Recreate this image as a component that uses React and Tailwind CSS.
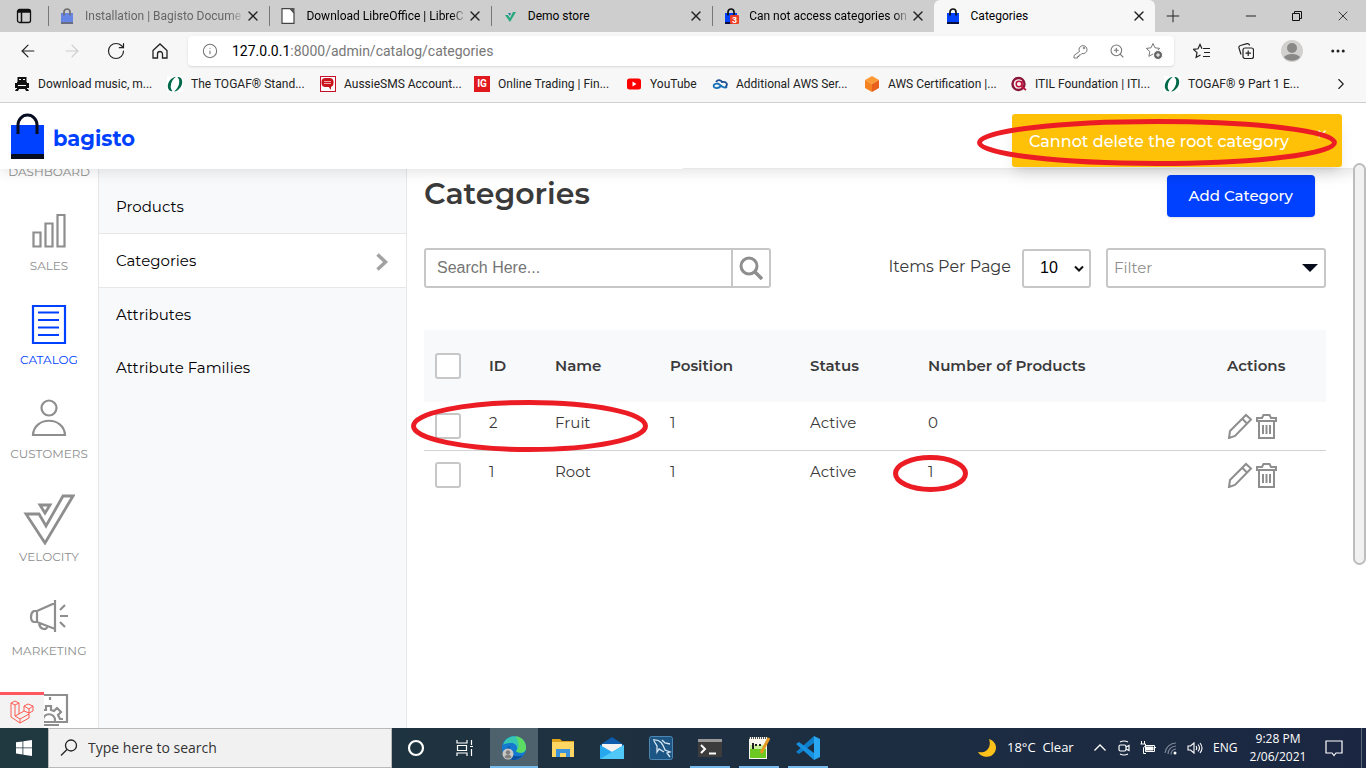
import React from 'react';
import {
  ArrowLeft, ArrowRight, RotateCw, Info, ZoomIn, X, Plus, Minus, Ellipsis, ChevronRight,
} from 'lucide-react';

const BagIcon = ({ className = 'h-4 w-4', badge }) => (
  <svg viewBox="0 0 16 16" className={className} aria-hidden="true">
    <rect x="2" y="5" width="12" height="9" fill="#0041ff" />
    <rect x="2" y="14" width="12" height="2" fill="#060c3b" />
    <path d="M5 7.500V4a3 3 0 0 1 6 0v3.500" fill="none" stroke="#111" strokeWidth="1.700" />
    {badge && (
      <>
        <rect x="7" y="7" width="9" height="9" rx="1" fill="#f03d25" />
        <text x="11.500" y="15" fontSize="9" fontWeight="700" fill="#fff" textAnchor="middle" fontFamily="Liberation Sans">3</text>
      </>
    )}
  </svg>
);

const DocIcon = () => (
  <svg viewBox="0 0 16 16" className="h-4 w-4" aria-hidden="true">
    <path d="M2 .7h8L14 5v10.300H2z" fill="#fff" stroke="#444" strokeWidth="1.200" />
    <path d="M9 0h5.500v5.500z" fill="#555" />
  </svg>
);

const CheckLogo = () => (
  <svg viewBox="0 0 16 16" className="h-4 w-4" aria-hidden="true">
    <path d="M3 7h3l2 3 3-6h3L8 14z" fill="#26a97f" />
    <path d="M6 5h3L8 8z" fill="#26799f" />
  </svg>
);

const TogafIcon = () => (
  <svg viewBox="0 0 16 16" className="h-4 w-4" aria-hidden="true">
    <rect width="16" height="16" fill="#fff" />
    <path d="M9 .8C2 1.500-1.500 11 2.500 14.500c1 .9 2.500.9 3 .5C2 12 4 4 9 .8z" fill="#00694b" />
    <path d="M7 15.500c7-.7 10.500-10.200 6.500-13.700-1-.9-2.500-.9-3-.5C14 4.300 12 12.300 7 15.500z" fill="#00694b" />
  </svg>
);

const bookmarkIcons = {
  music: (
    <svg viewBox="0 0 16 16" className="h-4 w-4" aria-hidden="true">
      <path d="M3.500 1h9v5h-9zM1 7h14v5H1zM2 13h3l-1 2H1zM11 13h3l1 2h-3z" fill="#111" />
      <path d="M5 3.500h2M9 3.500h2M4 9.500h8" stroke="#fff" />
      <path d="M3 6.500h10M3 12.500h10" stroke="#111" />
    </svg>
  ),
  togaf: <TogafIcon />,
  sms: (
    <svg viewBox="0 0 16 16" className="h-4 w-4" aria-hidden="true">
      <rect x=".5" y=".5" width="15" height="15" fill="#fff" stroke="#c8102e" />
      <rect x="1.500" y="2" width="12" height="9" rx="4" fill="#c8141b" />
      <path d="M8 10l3 4V9z" fill="#c8141b" />
      <path d="M4 5.500h7M4 7.500h7" stroke="#f4a9a9" />
    </svg>
  ),
  ig: <span className="flex h-4 w-4 items-center justify-center bg-[#e1191e] text-[10px] font-bold text-white">IG</span>,
  youtube: (
    <svg viewBox="0 0 16 16" className="h-4 w-4" aria-hidden="true">
      <rect x="1" y="2.500" width="14" height="11" rx="2.500" fill="#f00" />
      <path d="M6.500 5.500v5l4-2.500z" fill="#fff" />
    </svg>
  ),
  cloud: (
    <svg viewBox="0 0 16 16" className="h-4 w-4" fill="none" strokeWidth="1.800" aria-hidden="true">
      <path d="M15 11c-4 3-7-4-10-3.500-5 .5-4 5 0 4.500 2 0 3-1 4-2" stroke="#1a73b8" />
      <path d="M4 6c2-3 5-2 6 0 5-1 6 3 3.500 5" stroke="#1d4f91" />
    </svg>
  ),
  cube: (
    <svg viewBox="0 0 16 16" className="h-4 w-4" aria-hidden="true">
      <path d="M8 0l7 4-7 4-7-4z" fill="#fb9a34" />
      <path d="M1 4l7 4v8l-7-4z" fill="#f58220" />
      <path d="M15 4L8 8v8l7-4z" fill="#e8601c" />
    </svg>
  ),
  itil: (
    <svg viewBox="0 0 16 16" className="h-4 w-4" fill="none" aria-hidden="true">
      <circle cx="7.500" cy="8" r="6" stroke="#8b1538" strokeWidth="2.400" />
      <circle cx="8" cy="8" r="2.800" stroke="#c0123c" strokeWidth="1.500" />
      <path d="M11 5v6l4 3" stroke="#c0123c" strokeWidth="1.600" />
    </svg>
  ),
};

const tabs = [
  { title: 'Installation | Bagisto Docume', icon: <BagIcon />, faded: true },
  { title: 'Download LibreOffice | LibreC', icon: <DocIcon /> },
  { title: 'Demo store', icon: <CheckLogo /> },
  { title: 'Can not access categories on', icon: <BagIcon badge /> },
  { title: 'Categories', icon: <BagIcon />, active: true },
];

const bookmarks = [
  { label: 'Download music, m...', icon: 'music', width: 'w-[153px]' },
  { label: 'The TOGAF® Stand...', icon: 'togaf', width: 'w-[153px]' },
  { label: 'AussieSMS Account...', icon: 'sms', width: 'w-[154px]' },
  { label: 'Online Trading | Fin...', icon: 'ig', width: 'w-[152px]' },
  { label: 'YouTube', icon: 'youtube', width: 'w-[86px]' },
  { label: 'Additional AWS Ser...', icon: 'cloud', width: 'w-[152px]' },
  { label: 'AWS Certification |...', icon: 'cube', width: 'w-[147px]' },
  { label: 'ITIL Foundation | ITI...', icon: 'itil', width: 'w-[153px]' },
  { label: 'TOGAF® 9 Part 1 E...', icon: 'togaf', width: 'w-[153px]' },
];

function Tab({ tab }) {
  return (
    <div className={`flex w-1/5 min-w-0 items-center ${tab.active ? 'rounded-t-md bg-[#f7f7f7]' : ''}`}>
      <span className={`mr-[10px] h-5 w-px shrink-0 ${tab.active ? '' : 'bg-[#777]'}`} />
      <span className={tab.faded ? 'shrink-0 opacity-50' : 'shrink-0'}>{tab.icon}</span>
      <span className={`ml-[10px] flex-1 whitespace-nowrap ${tab.title.length > 20 ? 'mask-r-from-90%' : ''} ${tab.faded ? 'text-[#666]' : 'text-black'}`}>
        {tab.title}
      </span>
      <button aria-label={`Close ${tab.title}`} className="mr-2 shrink-0">
        <X className="h-4 w-4" strokeWidth={2} />
      </button>
    </div>
  );
}

function TabStrip() {
  return (
    <div className="flex h-8 items-stretch bg-[#cecece]">
      <button aria-label="Tab actions" className="flex w-12 items-center justify-center">
        <svg viewBox="0 0 16 16" className="h-4 w-4" fill="none" stroke="#111" aria-hidden="true">
          <rect x="1.500" y="1.500" width="13" height="13" rx="2" strokeWidth="1.300" />
          <path d="M1 4h14M5.500 4v10" strokeWidth="1.500" />
          <path d="M2 3h12" strokeWidth="2" />
        </svg>
      </button>
      <div className="flex min-w-0 flex-1">
        {tabs.map((t) => <Tab key={t.title} tab={t} />)}
      </div>
      <div className="flex w-[211px] items-center">
        <button aria-label="New tab" className="flex w-9 justify-center"><Plus className="h-5 w-5" strokeWidth={1.2} /></button>
        <div className="flex flex-1 justify-end">
          <button aria-label="Minimize" className="flex w-[46px] justify-center"><Minus className="h-4 w-4" strokeWidth={1.5} /></button>
          <button aria-label="Restore" className="flex w-[46px] items-center justify-center">
            <svg viewBox="0 0 12 12" className="h-3 w-3" fill="none" stroke="#111" aria-hidden="true">
              <path d="M1.500 3.500h7v7h-7zM3.500 3.500v-2h7v7h-2" />
            </svg>
          </button>
          <button aria-label="Close window" className="flex w-[46px] justify-center"><X className="h-4 w-4" strokeWidth={1.3} /></button>
        </div>
      </div>
    </div>
  );
}

const starPath = 'M8 1.500l2 4.300 4.700.6-3.500 3.200.9 4.700L8 12l-4.100 2.300.9-4.700L1.300 6.400 6 5.800z';

function Toolbar() {
  const btn = 'flex w-11 shrink-0 items-center justify-center';
  return (
    <div className="flex items-center bg-[#f7f7f7] px-[6px] pb-[3px] pt-1">
      <button aria-label="Back" className={btn}><ArrowLeft className="h-5 w-5" strokeWidth={1.4} /></button>
      <button aria-label="Forward" className={`${btn} text-[#ccc]`}><ArrowRight className="h-5 w-5" strokeWidth={1.4} /></button>
      <button aria-label="Refresh" className={btn}><RotateCw className="h-5 w-5" strokeWidth={1.4} /></button>
      <button aria-label="Home" className={btn}>
        <svg viewBox="0 0 16 16" className="h-4 w-4" fill="none" stroke="#222" strokeWidth="1.300" aria-hidden="true">
          <path d="M1 7.500L8 1l7 6.500V15h-4.500v-4a2.500 2.500 0 0 0-5 0v4H1z" />
        </svg>
      </button>
      <div className="mx-[6px] flex h-[30px] flex-1 items-center rounded bg-white pl-[14px] pr-[11px] text-[#777] shadow-sm">
        <Info className="h-4 w-4" strokeWidth={1.6} />
        <p className="ml-[14px] flex-1 text-sm"><span className="text-black">127.0.0.1</span>:8000/admin/catalog/categories</p>
        <div className="flex items-center gap-5">
          <svg viewBox="0 0 16 16" className="h-4 w-4" fill="none" stroke="currentColor" aria-hidden="true">
            <path d="M6.500 8.500a4 4 0 1 1 2.500 2L7.500 12H6v1.500H4.500V15H1v-2.500z" />
            <circle cx="11" cy="5" r=".8" />
          </svg>
          <ZoomIn className="h-4 w-4" strokeWidth={1.6} />
          <svg viewBox="0 0 18 18" className="h-[18px] w-[18px]" fill="none" stroke="currentColor" aria-hidden="true">
            <path d={starPath} />
            <circle cx="13" cy="13" r="4.500" fill="#666" stroke="#fff" />
            <path d="M13 11v4M11 13h4" stroke="#fff" />
          </svg>
        </div>
      </div>
      <button aria-label="Favorites" className={btn}>
        <svg viewBox="0 0 18 16" className="h-4 w-[18px]" fill="none" stroke="#222" strokeWidth="1.200" aria-hidden="true">
          <path d="M9 5.800L7 1.500 5 5.800l-4.500.6L4 9.600l-.9 4.700L7.500 12M10 5.500h7M11 9.500h6M10 13.500h7" />
        </svg>
      </button>
      <button aria-label="Collections" className={btn}>
        <svg viewBox="0 0 16 16" className="h-4 w-4" fill="none" stroke="#222" strokeWidth="1.200" aria-hidden="true">
          <rect x="5" y="5" width="10.500" height="10.500" rx="2" />
          <path d="M10.200 7.500v5.500M7.500 10.200h5.500M3 11.500L1 5a2 2 0 0 1 1.500-2.500L9 .7A2 2 0 0 1 11.500 2.500" />
        </svg>
      </button>
      <button aria-label="Profile" className="flex w-12 shrink-0 justify-center">
        <svg viewBox="0 0 22 22" className="h-[22px] w-[22px]" aria-hidden="true">
          <circle cx="11" cy="11" r="11" fill="#d2d0ce" />
          <circle cx="11" cy="8" r="5" fill="#8a8886" />
          <path d="M3 17c3-4 13-4 16 0-3 5-13 5-16 0z" fill="#8a8886" />
        </svg>
      </button>
      <button aria-label="Settings and more" className={btn}><Ellipsis className="h-[18px] w-[18px]" strokeWidth={2} /></button>
    </div>
  );
}

function Bookmarks() {
  return (
    <nav aria-label="Bookmarks" className="flex h-[34px] items-center border-b border-[#cfcfcf] bg-[#f7f7f7] pb-1 pl-[14px] pr-4">
      {bookmarks.map((b) => (
        <a key={b.label} href="#" className={`flex shrink-0 items-center gap-2 whitespace-nowrap ${b.width}`}>
          {bookmarkIcons[b.icon]}
          {b.label}
        </a>
      ))}
      <button aria-label="More bookmarks" className="ml-auto"><ChevronRight className="h-[18px] w-[18px]" strokeWidth={1.5} /></button>
    </nav>
  );
}

const menu = [
  {
    label: 'SALES',
    icon: <path d="M8.500 26.500h7v14h-7zM20.500 17.500h7v23h-7zM32.500 9h7v31.500h-7z" />,
  },
  {
    label: 'CATALOG',
    active: true,
    icon: <path d="M8 6h32v37H8zM13 12.500h21M13 20h21M13 27.500h21M13 35h21" />,
  },
  {
    label: 'CUSTOMERS',
    icon: (
      <>
        <circle cx="24" cy="14" r="7.500" />
        <path d="M8 41c1-19 31-19 32 0z" />
      </>
    ),
  },
  {
    label: 'VELOCITY',
    tall: true,
    icon: <path d="M3 21h13l7 12L40 3h10L22 50zM17 12h10l-5 8z" />,
  },
  {
    label: 'MARKETING',
    icon: <path d="M12 20l18-8v26l-18-7zM30 9v32M12 20H9c-4 2-4 10 0 11h3zM14 32c1 8 9 7 8 3M35 19l5-5M35 25h8M35 31l5 5" />,
  },
];

function Sidebar() {
  return (
    <nav aria-label="Main menu" className="w-[99px] shrink-0 overflow-hidden border-r border-[#e7e7e7] bg-white text-[12px] leading-4 text-[#8e8e8e]">
      <a href="#" className="-mt-[5px] block text-center">DASHBOARD</a>
      {menu.map((m) => (
        <a
          key={m.label}
          href="#"
          className={`flex flex-col items-center justify-end ${m.tall ? 'h-[103px]' : 'h-[94px]'} ${m.active ? 'text-[#0041ff]' : ''}`}
        >
          <svg
            viewBox={m.tall ? '0 0 52 52' : '0 0 48 48'}
            className={m.tall ? 'mb-1 h-[52px] w-[52px]' : 'mb-1 h-12 w-12'}
            fill="none"
            stroke="currentColor"
            strokeWidth={m.tall ? 2.8 : 2.2}
            aria-hidden="true"
          >
            {m.icon}
          </svg>
          {m.label}
        </a>
      ))}
      <a href="#" aria-label="Configure" className="flex h-[94px] flex-col items-center pt-[26px]">
        <svg viewBox="0 0 48 48" className="h-12 w-12" fill="none" stroke="currentColor" strokeWidth="2.200" aria-hidden="true">
          <path d="M6 10h36v27H6zM18 40h16" />
          <path d="M18 36c-1-9 13-9 12 0M18 25h3v-4h5v4l3 1 3-3 4 4-3 3 2 4h3M25 12v3" />
        </svg>
      </a>
    </nav>
  );
}

const submenu = ['Products', 'Categories', 'Attributes', 'Attribute Families'];

function Submenu() {
  return (
    <nav aria-label="Catalog" className="w-[308px] shrink-0 border-r border-[#e7e7e7] bg-[#f8f9fb] pt-[11px] text-[15px] text-black">
      {submenu.map((s) => (
        <a
          key={s}
          href="#"
          className={s === 'Categories'
            ? 'flex h-[55px] items-center justify-between border-y border-[#e7e7e7] bg-white px-[17px] pt-[2px]'
            : 'flex h-[53px] items-center px-[17px] pt-[2px]'}
        >
          {s}
          {s === 'Categories' && (
            <svg viewBox="0 0 14 18" className="h-[18px] w-[14px]" fill="none" stroke="#a2a2a2" strokeWidth="3.500" aria-hidden="true">
              <path d="M2.500 1.500L10.500 9l-8 7.500" />
            </svg>
          )}
        </a>
      ))}
    </nav>
  );
}

const rows = [
  { id: 2, name: 'Fruit', position: 1, status: 'Active', products: 0 },
  { id: 1, name: 'Root', position: 1, status: 'Active', products: 1 },
];

const checkboxClass = 'block h-[26px] w-[26px] appearance-none rounded-[3px] border-2 border-[#c7c7c7] bg-white';

const Ellipse = ({ className, rx, ry }) => (
  <svg
    className={`pointer-events-none absolute ${className}`}
    viewBox={`${-rx} ${-ry} ${rx * 2} ${ry * 2}`}
    fill="none"
    stroke="#ec1c24"
    strokeWidth="5"
    aria-hidden="true"
  >
    <ellipse rx={rx - 2.5} ry={ry - 2.5} />
  </svg>
);

function CategoryTable() {
  return (
    <table className="mt-[42px] w-full table-fixed text-left text-[15px] leading-5 text-[#3a3a3a]">
      <thead>
        <tr className="h-[72px] bg-[#f8f9fb]">
          <th className="w-[54px] pl-[11px]"><input type="checkbox" aria-label="Select all" className={checkboxClass} /></th>
          <th className="w-[66px] pl-[11px] font-semibold">ID</th>
          <th className="w-[115px] pl-[11px] font-semibold">Name</th>
          <th className="w-[140px] pl-[11px] font-semibold">Position</th>
          <th className="w-[118px] pl-[11px] font-semibold">Status</th>
          <th className="pl-[11px] font-semibold">Number of Products</th>
          <th className="w-[110px] pl-[11px] font-semibold">Actions</th>
        </tr>
      </thead>
      <tbody>
        {rows.map((r) => (
          <tr key={r.id} className="h-12 border-b border-[#d3d3d3] align-top last:border-b-0">
            <td className="relative pl-[11px] pt-[11px]">
              <input type="checkbox" aria-label={`Select ${r.name}`} className={checkboxClass} />
              {r.id === 2 && <Ellipse className="-left-[13px] -top-[2px] h-[52px] w-[237px] max-w-none" rx={118.5} ry={26} />}
            </td>
            <td className="pl-[11px] pt-[11px]">{r.id}</td>
            <td className="pl-[11px] pt-[11px]">{r.name}</td>
            <td className="pl-[11px] pt-[11px]">{r.position}</td>
            <td className="pl-[11px] pt-[11px]">{r.status}</td>
            <td className="relative pl-[11px] pt-[11px]">
              {r.products}
              {r.id === 1 && <Ellipse className="-left-6 top-1 h-[37px] w-[75px]" rx={37.5} ry={18.5} />}
            </td>
            <td className="pl-[11px] pt-[11px]">
              <div className="flex h-[37px] items-start text-[#8e8e8e]">
                <button aria-label={`Edit ${r.name}`}>
                  <svg viewBox="0 0 26 26" className="h-[26px] w-[26px]" fill="none" stroke="currentColor" strokeWidth="2" aria-hidden="true">
                    <path d="M2 25l1-7L19 2l5 4.500L8 23zM15 5.500l5 5" />
                  </svg>
                </button>
                <button aria-label={`Delete ${r.name}`}>
                  <svg viewBox="0 0 26 26" className="h-[26px] w-[26px]" fill="none" stroke="currentColor" strokeWidth="2" aria-hidden="true">
                    <path d="M6 8v17h15V8M4 8V5h5l1.500-3h6L18 5h5v3zM10 12v9M13.500 12v9M17 12v9" />
                  </svg>
                </button>
              </div>
            </td>
          </tr>
        ))}
      </tbody>
    </table>
  );
}

function Content() {
  return (
    <main className="min-w-0 flex-1 pl-[17px] pr-10 pt-[6px]">
      <div className="flex items-center justify-between pr-[11px]">
        <h1 className="pb-1 text-[30px] font-semibold leading-9 text-[#3a3a3a]">Categories</h1>
        <button className="h-[42px] rounded bg-[#0041ff] px-[22px] text-[15px] font-medium text-white shadow">Add Category</button>
      </div>
      <div className="mt-[31px] flex items-center">
        <div className="flex h-10 w-[347px]">
          <input
            type="text"
            aria-label="Search"
            placeholder="Search Here..."
            className="min-w-0 flex-1 rounded-l-[3px] border-2 border-[#c7c7c7] px-[11px] font-['Liberation_Sans',sans-serif] text-base placeholder:text-[#757575]"
          />
          <button aria-label="Search" className="flex w-[38px] items-center justify-center rounded-r-[3px] border-2 border-l-0 border-[#c7c7c7]">
            <svg viewBox="0 0 24 24" className="h-6 w-6" fill="none" stroke="#8e8e8e" strokeWidth="3" aria-hidden="true">
              <circle cx="10" cy="10" r="8" />
              <path d="M16 16l7 7" strokeWidth="3.500" />
            </svg>
          </button>
        </div>
        <label htmlFor="per-page" className="ml-auto mr-[11px] pb-[2px] text-base text-[#3a3a3a]">Items Per Page</label>
        <div className="relative mr-[15px]">
          <select id="per-page" className="h-[39px] w-[69px] appearance-none rounded-[3px] border-2 border-[#c7c7c7] bg-white pl-4 font-['Liberation_Sans',sans-serif] text-base text-black">
            <option>10</option>
            <option>20</option>
          </select>
          <svg viewBox="0 0 10 8" className="pointer-events-none absolute right-[7px] top-4 h-2 w-[10px]" fill="none" stroke="#111" strokeWidth="2" aria-hidden="true">
            <path d="M1 1.500l4 4 4-4" />
          </svg>
        </div>
        <button className="flex h-10 w-[220px] items-center justify-between rounded-[3px] border-2 border-[#c7c7c7] px-[6px] text-[15px] text-[#8e8e8e]">
          Filter
          <svg viewBox="0 0 16 8" className="h-2 w-4" aria-hidden="true"><path d="M0 0h16L8 8z" fill="#060c1b" /></svg>
        </button>
      </div>
      <CategoryTable />
    </main>
  );
}

function Toast() {
  return (
    <div role="alert" className="absolute right-6 top-[11px] z-20 flex h-[53px] w-[330px] items-center rounded-[3px] bg-[#ffc107] pl-[17px] pt-[2px] text-base font-medium text-white shadow-lg">
      Cannot delete the root category
      <button aria-label="Dismiss" className="absolute right-[14px] top-[14px]"><X className="h-3 w-3" strokeWidth={3} /></button>
      <Ellipse className="-left-[35px] top-[5px] h-[47px] w-[360px] max-w-none" rx={180} ry={23.5} />
    </div>
  );
}

function AdminPage() {
  return (
    <div className="relative flex min-h-0 flex-1 flex-col overflow-hidden bg-white font-['Montserrat',Inter,sans-serif]">
      <header className="relative z-10 flex h-[66px] shrink-0 items-center bg-white pl-[11px] shadow-[0_2px_14px_rgba(0,0,0,0.12)] after:absolute after:bottom-0 after:left-1/2 after:right-0 after:h-px after:bg-[#e8e8e8]">
        <svg viewBox="0 0 33 46" className="h-[46px] w-[33px]" aria-hidden="true">
          <rect y="12" width="33" height="29" fill="#0041ff" />
          <rect y="41" width="33" height="5" fill="#060c1f" />
          <path d="M7 21V12a9.500 10 0 0 1 19 0v9" fill="none" stroke="#060c1f" strokeWidth="3" />
        </svg>
        <span className="ml-[9px] pt-[6px] text-[21px] font-bold leading-7 text-[#0041ff]">bagisto</span>
      </header>
      <Toast />
      <div className="flex min-h-0 flex-1">
        <Sidebar />
        <Submenu />
        <Content />
      </div>
      <div className="absolute right-0 top-[60px] z-10 h-[402px] w-[13px] rounded-full border-2 border-[#bdbdbd] bg-[#f1f1f1]" />
      <button aria-label="Debug bar" className="absolute bottom-0 left-0 z-10 flex h-9 w-11 items-center justify-center border-t-[3px] border-[#ff5661] bg-[#f3f3f3]">
        <svg viewBox="0 0 24 24" className="h-6 w-6" fill="none" stroke="#ff5b50" strokeLinejoin="round" aria-hidden="true">
          <path d="M1 3l4-2 4 2-4 2zM1 3v14l9 6 9-5v-5M9 3v11l-4 2V5M5 16l5 3 9-5M10 19v4M14 6l4-2 5 2-4 3zM14 6v5l5 2 4-2V6M19 9v4M9 14l5-3" />
        </svg>
      </button>
    </div>
  );
}

const apps = [
  {
    name: 'Cortana',
    icon: <circle cx="12" cy="12" r="7" fill="none" stroke="#fff" strokeWidth="2.200" />,
  },
  {
    name: 'Task View',
    icon: <path d="M4 4v3h10V4M4 20v-3h10v3M4.500 9.500h9v5h-9zM18.500 4v5M18.500 13v7M17 10.500h3" fill="none" stroke="#fff" strokeWidth="1.200" />,
  },
  {
    name: 'Edge',
    focused: true,
    icon: (
      <>
        <circle cx="12" cy="12" r="12" fill="#1479cf" />
        <path d="M1 9C4-4 24-2 24 12c0 6-8 6-10 3 3-3 0-9-6-8-3 0-6 1-7 2z" fill="#37c6b2" />
        <path d="M14 0c8 2 10 7 10 12 0 5-7 6-10 3 5-4 2-9 0-15z" fill="#5ddb63" />
        <path d="M8 10c-3 6 4 13 13 9-3 4-7 5-11 5-7-5-7-12-2-14z" fill="#0c4f9e" />
        <circle cx="6" cy="18" r="5.500" fill="#c9c7c5" />
        <circle cx="6" cy="16.500" r="2.200" fill="#817f7d" />
        <path d="M2.500 21c1-3 6-3 7 0-2 2-5 2-7 0z" fill="#817f7d" />
      </>
    ),
  },
  {
    name: 'File Explorer',
    icon: (
      <>
        <path d="M1 3h8l2 2h12v16H1z" fill="#e0a11b" />
        <path d="M1 6h22v15H1z" fill="#ffd664" />
        <path d="M5 21v-8h14v8h-4v-4H9v4z" fill="#3b93dc" />
      </>
    ),
  },
  {
    name: 'Mail',
    icon: (
      <>
        <path d="M0 9l12-8 12 8v4H0z" fill="#0f5cad" />
        <path d="M2 8h20v8H2z" fill="#f2f2f2" />
        <path d="M0 9l12 7 12-7v14H0z" fill="#27a8ee" />
        <path d="M0 23L24 9v14z" fill="#50c8f8" />
      </>
    ),
  },
  {
    name: 'MySQL Workbench',
    icon: (
      <>
        <rect x=".5" y=".5" width="23" height="23" rx="2" fill="#1d5685" stroke="#4c86b3" />
        <path d="M4 4c8-1 10 5 12 10l5 2-3 1 3 4M5 5l3 5v6l2-3 5 3M13 4l3 3 5 1" fill="none" stroke="#d6e6f2" strokeWidth="1.300" />
      </>
    ),
  },
  {
    name: 'Terminal',
    open: true,
    icon: (
      <>
        <rect y="3" width="24" height="18" fill="#3c3c3c" />
        <path d="M0 3h24v3H0z" fill="#999" />
        <path d="M3 9l4 4-4 4" fill="none" stroke="#fff" strokeWidth="2" />
        <path d="M11 17.500h7" stroke="#fff" strokeWidth="2" />
      </>
    ),
  },
  {
    name: 'Notepad++',
    open: true,
    icon: (
      <>
        <path d="M2 1h18v22H2z" fill="#f7f7f0" />
        <path d="M3 13h16v9H3z" fill="#6cc921" />
        <path d="M3 9h16v4H3z" fill="#c9ef98" />
        <path d="M2 2h18" stroke="#555" strokeWidth="2" strokeDasharray="1 1" />
        <path d="M6 7v6M8 9h2M12 9h2" stroke="#222" strokeWidth="2" />
        <path d="M22 2l-8 15" stroke="#e49a22" strokeWidth="3" />
      </>
    ),
  },
  {
    name: 'Visual Studio Code',
    open: true,
    icon: (
      <>
        <path d="M18 0l6 3v18l-6 3z" fill="#2aa7f3" />
        <path d="M18 0v7L3 18l-3-2 18-16z" fill="#0f7fcc" />
        <path d="M18 24v-7L3 6 0 8z" fill="#1690df" />
      </>
    ),
  },
];

function Taskbar() {
  return (
    <footer className="flex h-10 shrink-0 items-stretch bg-linear-to-r from-[#20383f] to-[#1b2742] font-['Segoe_UI','Open_Sans',sans-serif] text-[12px] text-white">
      <button aria-label="Start" className="flex w-12 items-center justify-center">
        <svg viewBox="0 0 16 16" className="h-4 w-4" fill="#fff" aria-hidden="true">
          <path d="M0 2.300l6.500-.9v6.100H0zM7.300 1.300L16 0v7.500H7.300zM0 8.300h6.500v6.200L0 13.600zM7.300 8.300H16V16l-8.700-1.300z" />
        </svg>
      </button>
      <label className="flex w-[344px] items-center border border-[#b9b9b9] bg-[#f1f1f1] pl-[11px]">
        <svg viewBox="0 0 18 18" className="h-[18px] w-[18px]" fill="none" stroke="#222" strokeWidth="1.300" aria-hidden="true">
          <circle cx="11" cy="6.500" r="5.500" />
          <path d="M7 10.500l-6 6" />
        </svg>
        <input
          type="text"
          aria-label="Search Windows"
          placeholder="Type here to search"
          className="ml-[10px] min-w-0 flex-1 text-sm placeholder:text-[#333]"
        />
      </label>
      <div className="flex gap-px">
        {apps.map((a) => (
          <button
            key={a.name}
            aria-label={a.name}
            className={`flex w-12 flex-col items-center justify-end ${a.focused ? 'bg-[#4d626c]' : ''}`}
          >
            <svg viewBox="0 0 24 24" className="mb-[6px] h-6 w-6" aria-hidden="true">{a.icon}</svg>
            <span className={a.focused ? 'h-[2px] w-12 bg-[#76b9ed]' : a.open ? 'h-[2px] w-10 bg-[#76b9ed]' : 'h-[2px]'} />
          </button>
        ))}
      </div>
      <div className="ml-auto flex items-center">
        <svg viewBox="0 0 20 20" className="mr-[10px] h-5 w-5" aria-hidden="true">
          <path d="M12 1c9 3 9 13 2 17-5 2-11 0-13-4 8 2 14-5 11-13z" fill="#fcc21b" />
        </svg>
        <span className="w-[82px] whitespace-pre text-[13px]">18°C  Clear</span>
        <div className="flex w-[124px] items-center justify-between pl-[3px] pr-[10px]">
          <svg viewBox="0 0 16 16" className="h-4 w-4" fill="none" stroke="#fff" strokeWidth="1.300" aria-hidden="true">
            <path d="M2.500 10.500L8 5l5.500 5.500" />
          </svg>
          <svg viewBox="0 0 16 16" className="h-4 w-4" fill="none" stroke="#fff" strokeWidth="1.200" aria-hidden="true">
            <rect x="3" y="5" width="7" height="6" rx="1.500" />
            <path d="M10 7l3-1.500v5L10 9M4 2q4-2 8 0M4 14q4 2 8 0" />
          </svg>
          <svg viewBox="0 0 16 16" className="h-4 w-4" fill="none" stroke="#fff" aria-hidden="true">
            <path d="M5.500 5.500h9v6h-9zM14.500 7.500h1.500M1.500 1v3M4.500 1v3M0.500 4h5v2l-2 1.500v6H6" />
            <path d="M6 7h7v3H6z" fill="#fff" />
          </svg>
          <svg viewBox="0 0 16 16" className="h-4 w-4" fill="none" stroke="#7d8997" strokeWidth="1.200" aria-hidden="true">
            <path d="M2 13A11 11 0 0 1 13 3M5 14a8 8 0 0 1 8-8M8 14.500A5.500 5.500 0 0 1 13 9" />
            <circle cx="12" cy="13" r="1.500" fill="#fff" stroke="none" />
          </svg>
          <svg viewBox="0 0 16 16" className="h-4 w-4" fill="none" stroke="#fff" strokeWidth="1.100" aria-hidden="true">
            <path d="M1 6h2.500L7 3v10l-3.500-3H1zM9 6q1.500 2 0 4M11 4.500q3 3.500 0 7M13 3q4 5 0 10" />
          </svg>
        </div>
        <span className="w-[30px]">ENG</span>
        <div className="w-[70px] text-center leading-[18px]">
          <p>9:28 PM</p>
          <p>2/06/2021</p>
        </div>
        <button aria-label="Notifications" className="flex h-full w-[49px] items-center justify-end border-r border-[#5d6778] pr-[18px]">
          <svg viewBox="0 0 18 18" className="h-[18px] w-[18px]" fill="none" stroke="#fff" strokeWidth="1.200" aria-hidden="true">
            <path d="M1 2h16v12h-6l-2 2.500L7 14H1z" />
          </svg>
        </button>
        <span className="w-1" />
      </div>
    </footer>
  );
}

export default function App() {
  return (
    <div className="flex h-screen flex-col overflow-hidden bg-white font-['Segoe_UI',Roboto,sans-serif] text-[12px] text-[#222]">
      <TabStrip />
      <Toolbar />
      <Bookmarks />
      <AdminPage />
      <Taskbar />
    </div>
  );
}
